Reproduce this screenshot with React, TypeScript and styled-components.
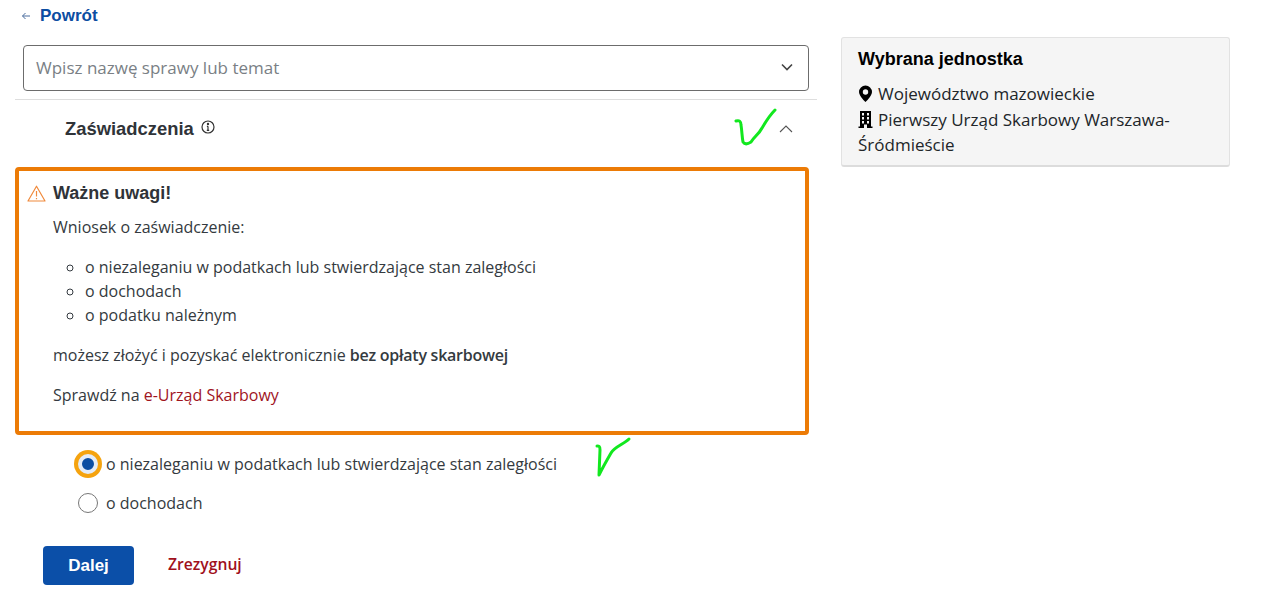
import React from "react";
import styled, { createGlobalStyle } from "styled-components";

const Global = createGlobalStyle`
  html, body { margin: 0; padding: 0; background: #fff; }
  body { font-family: "Open Sans", sans-serif; color: #343a40; }
`;
const Page = styled.div`
  position: relative;
  width: 1267px;
  height: 595px;
  overflow: hidden;
  display: grid;
  grid-template-columns: 802px 389px;
  column-gap: 24px;
  padding-left: 15px;
  box-sizing: border-box;
  align-items: start;
`;
const Main = styled.main`
  display: flex;
  flex-direction: column;
`;
const BackLink = styled.a`
  display: flex;
  align-items: center;
  gap: 9px;
  height: 30px;
  box-sizing: border-box;
  padding: 1px 0 0 6px;
  font: bold 17px "Liberation Sans", Arial, sans-serif;
  color: #0b4da2;
`;
const SelectBox = styled.div`
  margin: 15px 8px 0;
  height: 46px;
  box-sizing: border-box;
  border: 1px solid #6c6c6c;
  border-radius: 4px;
  display: flex;
  align-items: center;
  justify-content: space-between;
  padding: 0 15px 2px 12px;
  font-size: 17px;
  color: #7a7f85;
`;
const Divider = styled.hr`
  margin: 8px 0 0;
  border: 0;
  border-top: 1px solid #dedede;
`;
const AccordionHead = styled.div`
  height: 67px;
  display: flex;
  align-items: center;
  justify-content: space-between;
  padding: 0 24px 10px 50px;
  box-sizing: border-box;
`;
const AccordionTitle = styled.div`
  display: flex;
  align-items: center;
  gap: 7px;
  font: bold 18.4px "Liberation Sans", Arial, sans-serif;
  color: #2f3338;
`;
const InfoIcon = styled.svg`
  margin-top: -3px;
`;
const Notice = styled.section`
  width: 794px;
  height: 268px;
  box-sizing: border-box;
  border: 4px solid #ec7b06;
  border-radius: 4px;
  padding: 10px 0 0 8px;
  font-size: 16px;
  color: #343a40;
`;
const NoticeHead = styled.div`
  display: flex;
  align-items: center;
  gap: 7px;
  height: 24px;
  font: bold 18px "Liberation Sans", Arial, sans-serif;
  color: #2f3338;
`;
const NoticeBody = styled.div`
  padding: 10px 0 0 26px;
  line-height: 24px;
`;
const Para = styled.p`
  margin: 0 0 16px;
`;
const Bullets = styled.ul`
  margin: 0 0 16px;
  padding: 0 0 0 32px;
  list-style: circle;
`;
const Strong = styled.b`
  font-weight: 600;
  letter-spacing: -0.25px;
`;
const RedLink = styled.a`
  color: #a0141e;
`;
const Options = styled.div`
  display: flex;
  flex-direction: column;
  padding: 9px 0 0 59px;
  font-size: 16px;
  color: #343a40;
`;
const OptionRow = styled.label`
  display: flex;
  align-items: center;
  height: 39px;
  gap: 4px;
`;
const RadioWrap = styled.span`
  width: 28px;
  height: 28px;
  display: flex;
  align-items: center;
  justify-content: center;
  flex: none;
`;
const Radio = styled.span<{ $checked?: boolean }>`
  box-sizing: border-box;
  width: 20px;
  height: 20px;
  border-radius: 50%;
  background: #fff;
  border: 1px solid #777;
  ${(p) =>
    p.$checked &&
    `
    border: 4px solid #e4ecf7;
    background: #0b4da2;
    box-shadow: 0 0 0 4px #f5a30f;
  `}
`;
const Actions = styled.div`
  display: flex;
  align-items: center;
  gap: 34px;
  padding: 24px 0 0 28px;
`;
const PrimaryButton = styled.button`
  width: 91px;
  height: 39px;
  border: 0;
  border-radius: 4px;
  background: #0b4fa8;
  color: #fff;
  font: bold 17px "Liberation Sans", Arial, sans-serif;
`;
const CancelLink = styled.a`
  font-size: 15.7px;
  font-weight: 600;
  color: #a0101c;
  padding-bottom: 3px;
`;
const Card = styled.aside`
  margin-top: 37px;
  height: 130px;
  box-sizing: border-box;
  background: #f5f5f5;
  border: 1px solid #e2e2e2;
  border-bottom: 2px solid #dcdcdc;
  border-radius: 3px;
  padding: 11px 16px;
  color: #212529;
  font-size: 17px;
  line-height: 25.5px;
`;
const CardTitle = styled.h3`
  margin: 0 0 11px;
  font: bold 18px/21px "Liberation Sans", Arial, sans-serif;
  color: #000;
`;
const CardIcon = styled.svg`
  width: 15px;
  height: 17px;
  vertical-align: -2px;
  margin-right: 5px;
  color: #000;
`;
const Tick = styled.svg`
  position: absolute;
  fill: none;
  stroke: #12e81f;
  stroke-width: 3;
  stroke-linecap: round;
  stroke-linejoin: round;
`;

export default function App() {
  return (
    <Page>
      <Global />
      <Main>
        <BackLink>
          <svg width="10" height="10" viewBox="0 0 10 10" fill="none" stroke="#4a6d9e" strokeWidth="1">
            <path d="M9 5H1.5M4.500 2L1.500 5l3 3" />
          </svg>
          Powrót
        </BackLink>
        <SelectBox>
          Wpisz nazwę sprawy lub temat
          <svg width="12" height="8" viewBox="0 0 12 8" fill="none" stroke="#444" strokeWidth="1.6">
            <path d="M1 1.5l5 5 5-5" />
          </svg>
        </SelectBox>
        <Divider />
        <AccordionHead>
          <AccordionTitle>
            Zaświadczenia
            <InfoIcon width="14" height="14" viewBox="0 0 14 14" fill="none" stroke="#333" strokeWidth="1.2">
              <circle cx="7" cy="7" r="6" />
              <path d="M7 6.3v4M5.8 10.3h2.4M5.9 6.3H7" />
              <circle cx="7" cy="4" r=".6" fill="#333" />
            </InfoIcon>
          </AccordionTitle>
          <svg width="14" height="8" viewBox="0 0 14 8" fill="none" stroke="#555" strokeWidth="1.1">
            <path d="M1 7l6-6 6 6" />
          </svg>
        </AccordionHead>
        <Notice>
          <NoticeHead>
            <svg width="19" height="17" viewBox="0 0 19 17" fill="none" stroke="#f08a3c" strokeWidth="1.2">
              <path d="M9.5 1.2L18 16H1z" strokeLinejoin="round" />
              <path d="M9.5 6v5.5M9.5 13v1.2" />
            </svg>
            Ważne uwagi!
          </NoticeHead>
          <NoticeBody>
            <Para>Wniosek o zaświadczenie:</Para>
            <Bullets>
              <li>o niezaleganiu w podatkach lub stwierdzające stan zaległości</li>
              <li>o dochodach</li>
              <li>o podatku należnym</li>
            </Bullets>
            <Para>
              możesz złożyć i pozyskać elektronicznie <Strong>bez opłaty skarbowej</Strong>
            </Para>
            <Para>
              Sprawdź na <RedLink>e-Urząd Skarbowy</RedLink>
            </Para>
          </NoticeBody>
        </Notice>
        <Options>
          <OptionRow>
            <RadioWrap>
              <Radio $checked />
            </RadioWrap>
            o niezaleganiu w podatkach lub stwierdzające stan zaległości
          </OptionRow>
          <OptionRow>
            <RadioWrap>
              <Radio />
            </RadioWrap>
            o dochodach
          </OptionRow>
        </Options>
        <Actions>
          <PrimaryButton>Dalej</PrimaryButton>
          <CancelLink>Zrezygnuj</CancelLink>
        </Actions>
      </Main>
      <Card>
        <CardTitle>Wybrana jednostka</CardTitle>
        <div>
          <CardIcon viewBox="0 0 15 17" fill="currentColor">
            <path fillRule="evenodd" d="M7.5 0.5a6.500 6.500 0 0 0-6.500 6.500c0 4 6.500 10 6.500 10S14 11 14 7a6.500 6.500 0 0 0-6.500-6.500zm0 3.800a2.700 2.700 0 1 1 0 5.400 2.700 2.700 0 0 1 0-5.400z" />
          </CardIcon>
          Województwo mazowieckie
        </div>
        <div>
          <CardIcon viewBox="0 0 15 17" fill="currentColor">
            <path fillRule="evenodd" d="M2 0h11v15.500h1.500V17H.5v-1.500H2zM4 2v2.500h2V2zm5 0v2.500h2V2zM4 6v2.500h2V6zm5 0v2.500h2V6zM4 10v2.500h2V10zm5 0v2.500h2V10zM6 13.500V17h3v-3.500z" />
          </CardIcon>
          Pierwszy Urząd Skarbowy Warszawa-Śródmieście
        </div>
      </Card>
      <Tick style={{ left: 733, top: 106 }} width="46" height="44" viewBox="0 0 46 44">
        <path d="M3 15c3-1 5 0 5 4 1 6 1 12 2 17 2 3 5 2 8 0 3-5 8-8 11-14 3-5 7-12 13-18" />
      </Tick>
      <Tick style={{ left: 594, top: 436 }} width="38" height="44" viewBox="0 0 38 44">
        <path d="M3 10c2 0 3 0 3 4l-1 25c4-8 8-15 12-22 3-6 13-9 18-14" />
      </Tick>
    </Page>
  );
}
